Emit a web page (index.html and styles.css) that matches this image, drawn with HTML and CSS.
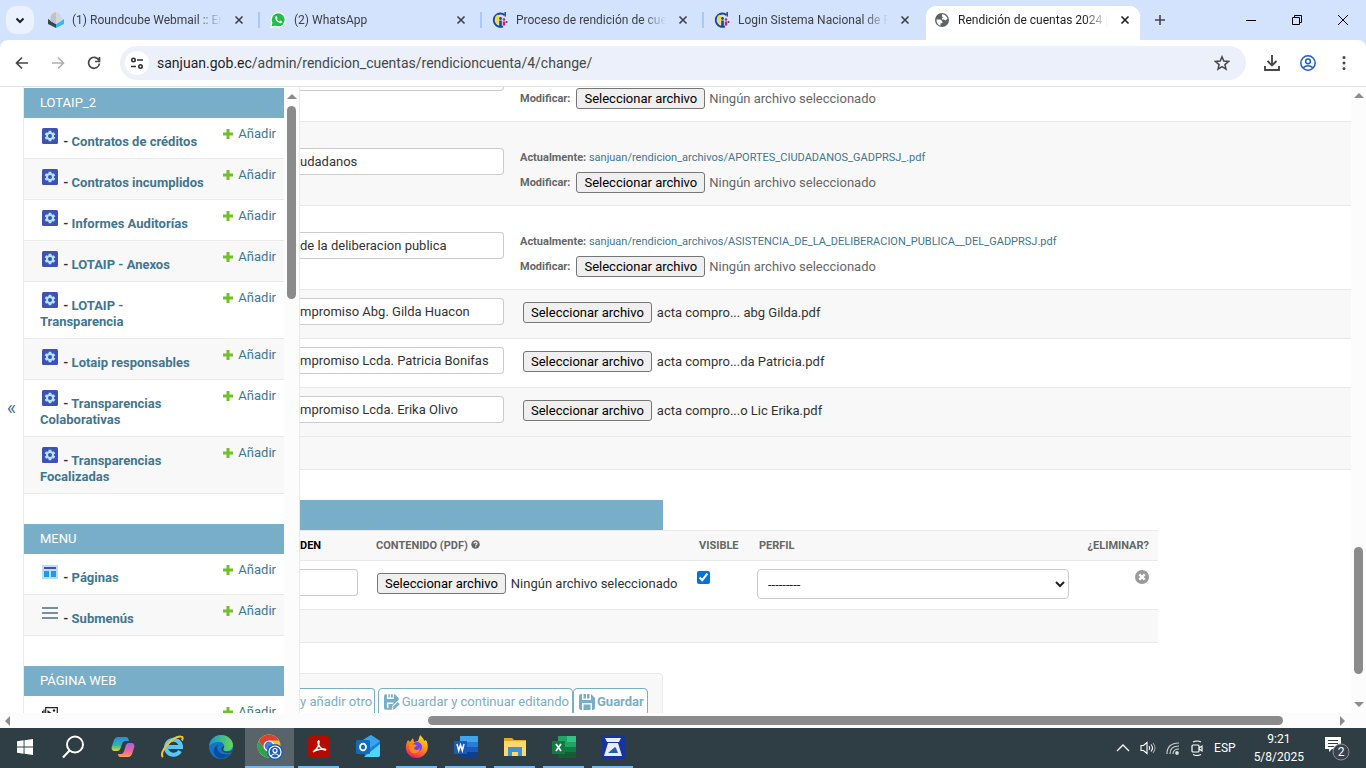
FILE: index.html
```html
<!DOCTYPE html>
<html lang="es">
<head>
    <meta charset="UTF-8">
    <meta name="viewport" content="width=device-width, initial-scale=1.0">
    <title>Rendición de cuentas 2024</title>
    <link rel="stylesheet" href="styles.css">
</head>
<body>
    <!-- Shared icons -->
    <svg class="sprites" aria-hidden="true">
        <symbol id="i-close" viewBox="0 0 10 10"><path d="M1.5 1.5l7 7M8.5 1.5l-7 7" stroke="currentColor" stroke-width="1.6" fill="none"/></symbol>
        <symbol id="i-gear" viewBox="0 0 16 16">
            <rect width="16" height="16" rx="1.5" fill="#3f51b5"/>
            <path d="M8 2.700v10.600M3.400 5.350l9.200 5.300M3.400 10.650l9.200-5.300" stroke="#b3e5fc" stroke-width="2.800"/>
            <circle cx="8" cy="8" r="4" fill="#b3e5fc"/>
            <circle cx="8" cy="8" r="2" fill="#3f51b5"/>
        </symbol>
        <symbol id="i-plus" viewBox="0 0 12 12"><path d="M6 1v10M1 6h10" stroke="#70bf2b" stroke-width="3"/></symbol>
        <symbol id="i-egob" viewBox="0 0 16 16">
            <path d="M12.500 3A6.600 6.600 0 1 0 11 14.300" fill="none" stroke="#164a94" stroke-width="2"/>
            <path d="M13.200 0v4.500" stroke="#164a94" stroke-width="1.500"/>
            <path d="M3.500 4.500c2-3 4-2 3.500 1l-.5 7c-3-1-4-5-3-8z" fill="#f1d94a"/>
            <circle cx="8.500" cy="6.500" r="1.400" fill="#164a94"/><path d="M7.200 8.500h2.600v6H7.200z" fill="#164a94"/>
            <circle cx="12" cy="7.500" r="1.300" fill="#d81e5b"/><path d="M10.800 9.500h2.400v4h-2.400z" fill="#d81e5b"/>
            <circle cx="14.500" cy="10" r="1" fill="#164a94"/>
        </symbol>
    </svg>

    <header class="browser">
        <div class="tabstrip">
            <button class="tab-search" aria-label="Buscar pestañas"><svg width="12" height="12" viewBox="0 0 12 12"><path d="M2.500 4.500L6 8l3.500-3.500" fill="none" stroke="#1f1f1f" stroke-width="2"/></svg></button>
            <div class="tab">
                <svg class="favicon" viewBox="0 0 16 16"><path d="M0 7l8 5v4L0 12z" fill="#37474f"/><path d="M16 7l-8 5v4l8-4z" fill="#36b8f5"/><path d="M8 0q5 1 5.500 6v3L8 12 2.500 9V6Q3 1 8 0z" fill="#d5d8da"/><path d="M8 0q-5 1-5.500 6v3L8 12z" fill="#bfc4c7"/></svg>
                <span class="tab-title">(1) Roundcube Webmail :: En</span>
                <button class="tab-close" aria-label="Cerrar"><svg><use href="#i-close"/></svg></button>
            </div>
            <div class="tab">
                <svg class="favicon" viewBox="0 0 16 16"><circle cx="8.200" cy="7.800" r="7.600" fill="#fff"/><path d="M0 16l1.500-5 3.500 4z" fill="#fff"/><circle cx="8.200" cy="7.800" r="6.500" fill="#1fc04a"/><path d="M1.500 14.500l1-4 3 3z" fill="#1fc04a"/><path d="M5.500 4.500l1.200-.3.900 2-.7.900c.6 1.100 1.400 1.800 2.500 2.300l.9-1 1.900 1-.2 1.200c-1 1-2.500.7-4.200-.5S4.500 6.300 5.500 4.500z" fill="#fff"/></svg>
                <span class="tab-title">(2) WhatsApp</span>
                <button class="tab-close" aria-label="Cerrar"><svg><use href="#i-close"/></svg></button>
            </div>
            <div class="tab">
                <svg class="favicon"><use href="#i-egob"/></svg>
                <span class="tab-title">Proceso de rendición de cue</span>
                <button class="tab-close" aria-label="Cerrar"><svg><use href="#i-close"/></svg></button>
            </div>
            <div class="tab last">
                <svg class="favicon"><use href="#i-egob"/></svg>
                <span class="tab-title">Login Sistema Nacional de R</span>
                <button class="tab-close" aria-label="Cerrar"><svg><use href="#i-close"/></svg></button>
            </div>
            <div class="tab active">
                <svg class="favicon" viewBox="0 0 16 16"><circle cx="8" cy="8" r="7" fill="#5f6368"/><path d="M2.500 7.500h4l1.800 1.800v2H6.500v2.500C4 13 2.300 10.500 2.500 7.500zM8 2.300c2.500 0 5 2 5.500 4.500l-2 1.700-1.500-1H8V5.700h1.500L8 4.500z" fill="#fff"/></svg>
                <span class="tab-title">Rendición de cuentas 2024 |</span>
                <button class="tab-close" aria-label="Cerrar"><svg><use href="#i-close"/></svg></button>
            </div>
            <button class="new-tab" aria-label="Nueva pestaña"><svg width="12" height="12" viewBox="0 0 12 12"><path d="M6 1v10M1 6h10" stroke="#444746" stroke-width="1.600"/></svg></button>
            <div class="window-controls">
                <button aria-label="Minimizar"><svg width="10" height="10" viewBox="0 0 10 10"><path d="M0 5.500h10" stroke="#000"/></svg></button>
                <button aria-label="Restaurar"><svg width="10" height="10" viewBox="0 0 10 10"><path d="M.5 2.500h7v7h-7zM2.500 2.500v-2h7v7h-2" fill="none" stroke="#000"/></svg></button>
                <button aria-label="Cerrar ventana"><svg width="10" height="10" viewBox="0 0 10 10"><path d="M0 0l10 10M10 0L0 10" stroke="#000"/></svg></button>
            </div>
        </div>
        <div class="toolbar">
            <button aria-label="Atrás"><svg width="16" height="16" viewBox="0 0 16 16"><path d="M14 8H3M8 2.500L2.500 8 8 13.500" fill="none" stroke="#474747" stroke-width="1.700"/></svg></button>
            <button aria-label="Adelante"><svg width="16" height="16" viewBox="0 0 16 16"><path d="M2 8h11M8 2.500L13.500 8 8 13.500" fill="none" stroke="#b0b0b0" stroke-width="1.700"/></svg></button>
            <button aria-label="Recargar"><svg width="16" height="16" viewBox="0 0 16 16"><path d="M12.800 5A5.500 5.500 0 1 0 13.500 8.500M13.500 2v4.500H9" fill="none" stroke="#474747" stroke-width="1.700"/></svg></button>
            <div class="omnibox">
                <span class="site-info"><svg width="14" height="14" viewBox="0 0 14 14"><g fill="none" stroke="#303030" stroke-width="1.600"><circle cx="3.500" cy="4" r="1.700"/><path d="M7 4h6M1 10.500h5"/><circle cx="10.500" cy="10.500" r="1.700"/></g></svg></span>
                <span class="url"><b>sanjuan.gob.ec</b>/admin/rendicion_cuentas/rendicioncuenta/4/change/</span>
                <button aria-label="Marcador"><svg width="16" height="16" viewBox="0 0 16 16"><path d="M8 1.800l1.800 4.300 4.700.4-3.600 3.100 1.100 4.500L8 11.700l-4 2.400 1.100-4.500L1.500 6.500l4.700-.4z" fill="none" stroke="#474747" stroke-width="1.500"/></svg></button>
            </div>
            <div class="toolbar-end">
                <button aria-label="Descargas"><svg width="16" height="16" viewBox="0 0 16 16"><path d="M8 0v10M3.500 6L8 10.500 12.500 6M1 11v4h14v-4" fill="none" stroke="#474747" stroke-width="1.900"/></svg></button>
                <button aria-label="Perfil"><svg width="16" height="16" viewBox="0 0 16 16"><g fill="none" stroke="#1a5fc8" stroke-width="1.500"><circle cx="8" cy="8" r="7.200"/><circle cx="8" cy="6.300" r="2.400"/><path d="M3.300 12.800c2.500-2.600 6.900-2.600 9.400 0"/></g></svg></button>
                <button aria-label="Menú"><svg width="16" height="16" viewBox="0 0 16 16" fill="#474747"><circle cx="8" cy="2.500" r="1.500"/><circle cx="8" cy="8" r="1.500"/><circle cx="8" cy="13.500" r="1.500"/></svg></button>
            </div>
        </div>
    </header>

    <div class="page">
        <button class="toggle-nav-sidebar" aria-label="Ocultar navegación">«</button>
        <nav class="nav-sidebar">
            <div class="nav-content">
                <table class="module">
                    <caption>LOTAIP_2</caption>
                    <tr><th><svg class="model-icon"><use href="#i-gear"/></svg> - <a href="#">Contratos de créditos</a></th><td><a href="#"><svg><use href="#i-plus"/></svg>Añadir</a></td></tr>
                    <tr><th><svg class="model-icon"><use href="#i-gear"/></svg> - <a href="#">Contratos incumplidos</a></th><td><a href="#"><svg><use href="#i-plus"/></svg>Añadir</a></td></tr>
                    <tr><th><svg class="model-icon"><use href="#i-gear"/></svg> - <a href="#">Informes Auditorías</a></th><td><a href="#"><svg><use href="#i-plus"/></svg>Añadir</a></td></tr>
                    <tr><th><svg class="model-icon"><use href="#i-gear"/></svg> - <a href="#">LOTAIP - Anexos</a></th><td><a href="#"><svg><use href="#i-plus"/></svg>Añadir</a></td></tr>
                    <tr><th><svg class="model-icon"><use href="#i-gear"/></svg> - <a href="#">LOTAIP - Transparencia</a></th><td><a href="#"><svg><use href="#i-plus"/></svg>Añadir</a></td></tr>
                    <tr><th><svg class="model-icon"><use href="#i-gear"/></svg> - <a href="#">Lotaip responsables</a></th><td><a href="#"><svg><use href="#i-plus"/></svg>Añadir</a></td></tr>
                    <tr><th><svg class="model-icon"><use href="#i-gear"/></svg> - <a href="#">Transparencias Colaborativas</a></th><td><a href="#"><svg><use href="#i-plus"/></svg>Añadir</a></td></tr>
                    <tr><th><svg class="model-icon"><use href="#i-gear"/></svg> - <a href="#">Transparencias Focalizadas</a></th><td><a href="#"><svg><use href="#i-plus"/></svg>Añadir</a></td></tr>
                </table>
                <table class="module">
                    <caption>MENU</caption>
                    <tr><th><svg class="model-icon" viewBox="0 0 16 16"><path d="M0 1h16v14H0z" fill="#bbdefb"/><path d="M2 3h12v2H2z" fill="#3f51b5"/><path d="M2 7h5v6H2zM9 7h5v6H9z" fill="#2196f3"/></svg> - <a href="#">Páginas</a></th><td><a href="#"><svg><use href="#i-plus"/></svg>Añadir</a></td></tr>
                    <tr><th><svg class="model-icon" viewBox="0 0 16 16"><path d="M0 3h16M0 8h16M0 13h16" stroke="#78909c" stroke-width="1.800"/></svg> - <a href="#">Submenús</a></th><td><a href="#"><svg><use href="#i-plus"/></svg>Añadir</a></td></tr>
                </table>
                <table class="module">
                    <caption>PÁGINA WEB</caption>
                    <tr><th><svg class="model-icon" viewBox="0 0 16 16"><path d="M3.700 1.700h11.600v9.600H3.700zM2 3.500v10h11M.5 5v10h11" fill="none" stroke="#222" stroke-width="1.200"/><path d="M5.500 4l4 3-4 3z" fill="#222"/><circle cx="12" cy="4.500" r="1.200" fill="#222"/></svg></th><td><a href="#"><svg><use href="#i-plus"/></svg>Añadir</a></td></tr>
                </table>
            </div>
            <div class="scrollbar nav-scroll"><i class="arrow up"></i><span class="thumb"></span></div>
        </nav>

        <main>
            <table class="inline files">
                <colgroup><col class="col-name"><col></colgroup>
                <tr class="saved">
                    <td><input type="text" aria-label="Nombre"></td>
                    <td><div class="change"><b>Modificar:</b><button type="button" class="pick">Seleccionar archivo</button><span>Ningún archivo seleccionado</span></div></td>
                </tr>
                <tr class="saved">
                    <td><input type="text" aria-label="Nombre" value="udadanos"></td>
                    <td>
                        <div class="current"><b>Actualmente:</b> <a href="#">sanjuan/rendicion_archivos/APORTES_CIUDADANOS_GADPRSJ_.pdf</a></div>
                        <div class="change"><b>Modificar:</b><button type="button" class="pick">Seleccionar archivo</button><span>Ningún archivo seleccionado</span></div>
                    </td>
                </tr>
                <tr class="saved">
                    <td><input type="text" aria-label="Nombre" value="de la deliberacion publica"></td>
                    <td>
                        <div class="current"><b>Actualmente:</b> <a href="#">sanjuan/rendicion_archivos/ASISTENCIA_DE_LA_DELIBERACION_PUBLICA__DEL_GADPRSJ.pdf</a></div>
                        <div class="change"><b>Modificar:</b><button type="button" class="pick">Seleccionar archivo</button><span>Ningún archivo seleccionado</span></div>
                    </td>
                </tr>
                <tr>
                    <td><input type="text" aria-label="Nombre" value="mpromiso Abg. Gilda Huacon"></td>
                    <td><div class="file"><button type="button" class="pick">Seleccionar archivo</button><span>acta compro... abg Gilda.pdf</span></div></td>
                </tr>
                <tr>
                    <td><input type="text" aria-label="Nombre" value="mpromiso Lcda. Patricia Bonifas"></td>
                    <td><div class="file"><button type="button" class="pick">Seleccionar archivo</button><span>acta compro...da Patricia.pdf</span></div></td>
                </tr>
                <tr>
                    <td><input type="text" aria-label="Nombre" value="mpromiso Lcda. Erika Olivo"></td>
                    <td><div class="file"><button type="button" class="pick">Seleccionar archivo</button><span>acta compro...o Lic Erika.pdf</span></div></td>
                </tr>
                <tr class="add-row"><td colspan="2"></td></tr>
            </table>

            <h2 class="inline-heading"></h2>
            <table class="inline contents">
                <colgroup><col class="col-order"><col class="col-pdf"><col class="col-visible"><col class="col-profile"><col class="col-delete"></colgroup>
                <thead>
                    <tr>
                        <th class="required">DEN</th>
                        <th>CONTENIDO (PDF) <svg class="help" viewBox="0 0 10 10"><circle cx="5" cy="5" r="4.700" fill="#666"/><path d="M3.300 4c0-2.200 3.500-2 3.400-.2C6.700 5 5.200 4.800 5.200 6M5.200 6.900v1.200" fill="none" stroke="#fff" stroke-width="1.300"/></svg></th>
                        <th>VISIBLE</th>
                        <th>PERFIL</th>
                        <th class="delete">¿ELIMINAR?</th>
                    </tr>
                </thead>
                <tbody>
                    <tr>
                        <td><input type="text" aria-label="Orden"></td>
                        <td><div class="file"><button type="button" class="pick">Seleccionar archivo</button><span>Ningún archivo seleccionado</span></div></td>
                        <td><input type="checkbox" aria-label="Visible" checked></td>
                        <td><select aria-label="Perfil"><option>---------</option></select></td>
                        <td class="delete"><button type="button" class="remove" aria-label="Eliminar"><svg width="14" height="14" viewBox="0 0 14 14"><circle cx="7" cy="7" r="7" fill="#999"/><path d="M4.300 4.300l5.400 5.400M9.700 4.300L4.300 9.700" stroke="#fff" stroke-width="2.400"/></svg></button></td>
                    </tr>
                    <tr class="add-row"><td colspan="5"></td></tr>
                </tbody>
            </table>

            <div class="submit-row">
                <button type="button" class="another">y añadir otro</button>
                <button type="button" class="continue"><svg viewBox="0 0 16 16"><path d="M0 2q0-2 2-2h1v5h7V0h1l4 4v2l-7 6v4H2q-2 0-2-2z" fill="#79aec8"/><path d="M4.500 0H6v3.500H4.500zM7 0h2v3.500H7z" fill="#79aec8"/><path d="M3 8.500h7l-2.500 3V14H3z" fill="#fff"/><path d="M4.500 10h4v4h-4z" fill="#79aec8"/><path d="M9 15.800l.5-3.300L14 8l2 2-4.500 4.700z" fill="#79aec8"/></svg>Guardar y continuar editando</button>
                <button type="button" class="default"><svg viewBox="0 0 16 16"><path d="M0 2q0-2 2-2h1v6h9V0l4 4v10q0 2-2 2h-1V9H3v7H2q-2 0-2-2z" fill="#79aec8"/><path d="M4.500 0H7v4.500H4.500zM8 0h2.500v4.500H8zM4.500 10.500h7V16h-7z" fill="#79aec8"/></svg>Guardar</button>
            </div>
        </main>
        <div class="scrollbar page-scroll"><i class="arrow up"></i><span class="thumb"></span><i class="arrow down"></i></div>
    </div>
    <div class="scrollbar-x"><i class="arrow left"></i><div class="track"><span class="thumb"></span></div><i class="arrow right"></i></div>

    <footer class="taskbar">
        <button aria-label="Inicio"><svg width="16" height="16" viewBox="0 0 16 16"><path d="M0 2.300L6.600 1.300v6.200H0zM7.500 1.200L16 0v7.500H7.500zM0 8.500h6.600v6.200L0 13.700zM7.500 8.500H16V16l-8.500-1.200z" fill="#fff"/></svg></button>
        <button aria-label="Buscar"><svg width="24" height="24" viewBox="0 0 24 24"><circle cx="13" cy="9.500" r="8" fill="none" stroke="#fff" stroke-width="2"/><path d="M7.500 15.500L1 22.500" stroke="#fff" stroke-width="2.200"/></svg></button>
        <button aria-label="Copilot"><svg width="24" height="24" viewBox="0 0 24 24"><defs><linearGradient id="cop1" x2="0" y2="1"><stop stop-color="#1f8fe8"/><stop offset=".6" stop-color="#33b6a0"/><stop offset="1" stop-color="#e7d32d"/></linearGradient><linearGradient id="cop2" x2="0" y2="1"><stop stop-color="#a45fe8"/><stop offset=".6" stop-color="#f0679a"/><stop offset="1" stop-color="#ffa04d"/></linearGradient></defs><path d="M7 2h8c2 0 2 1 3 4h-4c-2 0-3 2-4 6-1 3-2 4-4 4H4c-3 0-4-2-3-5l2-6c1-2 2-3 4-3z" fill="url(#cop1)"/><path d="M17 22H9c-1 0-2-1-2-3h3c2 0 3-2 4-6 1-4 2-5 4-5h2c3 0 4 2 3 5l-2 6c-1 2-2 3-4 3z" fill="url(#cop2)"/></svg></button>
        <button aria-label="Internet Explorer"><svg width="24" height="24" viewBox="0 0 24 24"><path d="M20 16a7.500 7.500 0 1 1 1-4H8" fill="none" stroke="#57c7f5" stroke-width="4"/><path d="M3 22C-2 18 12 1 21 1.500c2 0 2 2 1 4" fill="none" stroke="#f5c431" stroke-width="2"/></svg></button>
        <button aria-label="Edge"><svg width="24" height="24" viewBox="0 0 24 24"><defs><linearGradient id="edge"><stop stop-color="#1696d8"/><stop offset="1" stop-color="#63d94f"/></linearGradient></defs><circle cx="12" cy="12" r="12" fill="#1273c9"/><path d="M0 11C1 4 6 0 12 0c7 0 12 5 12 10 0 4-3 6-6 6-4 0-4-1-3-3 1-4-2-6-5-6-5 0-8 2-10 4z" fill="url(#edge)"/><path d="M9 10c-3 5 2 11 12 9-5 6-14 6-16-1-1-4 1-7 4-8z" fill="#0c4d99"/><path d="M14.500 13c-2 3 3 5 8 3l1 1c-5 2-11 0-11-3 0-1 1-2 2-3 1 0 1 1 0 2z" fill="#2f3d44"/></svg></button>
        <button class="current-app" aria-label="Chrome"><svg width="26" height="26" viewBox="0 0 26 26"><circle cx="12" cy="12" r="11.500" fill="#f9c22c"/><path d="M2 6.500A11.500 11.500 0 0 1 22 6.500H12L7 15z" fill="#dd4033"/><path d="M2 6.500a11.500 11.500 0 0 0 10 17l5-8.500H7z" fill="#2fa251"/><circle cx="12" cy="12" r="5.500" fill="#fff"/><circle cx="12" cy="12" r="4.400" fill="#3c7de6"/><circle cx="18" cy="18" r="8" fill="#1b5bc0"/><g fill="none" stroke="#fff" stroke-width="1.200"><circle cx="18" cy="18" r="6"/><circle cx="18" cy="16.500" r="2"/><path d="M14 22c2-3 6-3 8 0"/></g></svg></button>
        <button class="open" aria-label="Acrobat"><svg width="22" height="22" viewBox="0 0 22 22"><rect width="22" height="22" rx="4" fill="#b30b00"/><path d="M5 16c3-2 6-6 6-10 0-2-1-1-1 0 0 4 4 8 7 8 1 0 1-1-1-1-4 0-8 1-11 3z" fill="none" stroke="#fff" stroke-width="1.500"/></svg></button>
        <button aria-label="Outlook"><svg width="24" height="24" viewBox="0 0 24 24"><path d="M7 5l8-5 9 6v14q0 2-2 2H9z" fill="#1683d8"/><path d="M7 5l8-5 9 6-11 8z" fill="#38a4eb"/><path d="M24 9v11q0 2-2 2H8z" fill="#4fd4fa"/><rect y="5" width="14" height="14" rx="1.500" fill="#0f6cbd"/><ellipse cx="7" cy="12" rx="3" ry="3.400" fill="none" stroke="#fff" stroke-width="1.800"/></svg></button>
        <button class="open" aria-label="Firefox"><svg width="24" height="24" viewBox="0 0 24 24"><defs><linearGradient id="fox" x1=".8" y1="0" x2=".3" y2="1"><stop stop-color="#ffe226"/><stop offset=".5" stop-color="#ff8a16"/><stop offset="1" stop-color="#f5156c"/></linearGradient></defs><path d="M3 5l2 2 3-4 1 4 4-1 2-6c3 3 4 4 4 6l2-1c3 5 2 11-1 14-4 5-12 5-16 1C0 16 0 10 3 5z" fill="url(#fox)"/><circle cx="12" cy="12" r="5" fill="#7542e5"/><path d="M4 10c3-2 5 0 8 0-1 2-3 2-3 4 2 2 5 1 6-1 0 5-6 7-9 4-2-2-2-5-2-7z" fill="#ff8a16"/></svg></button>
        <button class="open" aria-label="Word"><svg width="24" height="22" viewBox="0 0 24 22"><path d="M6 0h18v6H6z" fill="#41a5ee"/><path d="M6 6h18v5H6z" fill="#2b7cd3"/><path d="M6 11h18v5H6z" fill="#185abd"/><path d="M6 16h18v6H6z" fill="#103f91"/><path d="M0 5h13v13H0z" fill="#185abd"/><path d="M3 8l1.700 6.500L6.500 9l1.800 5.500L10 8" fill="none" stroke="#fff" stroke-width="1.500"/></svg></button>
        <button class="open" aria-label="Explorador"><svg width="24" height="22" viewBox="0 0 24 22"><path d="M1 2h8l2 2h12v16H1z" fill="#e8a91e"/><path d="M1 5h22v15H1z" fill="#ffd970"/><path d="M5 11h14v9h-4v-4H9v4H5z" fill="#3b95d5"/></svg></button>
        <button class="open" aria-label="Excel"><svg width="24" height="22" viewBox="0 0 24 22"><path d="M6 0h9v22H6z" fill="#21a366"/><path d="M15 0h9v6h-9z" fill="#33c481"/><path d="M15 6h9v5h-9z" fill="#21a366"/><path d="M6 11h18v11H6z" fill="#107c41"/><path d="M6 16h18v6H6z" fill="#185c37"/><path d="M0 5h13v13H0z" fill="#107c41"/><path d="M4 8l5 7M9 8l-5 7" stroke="#fff" stroke-width="1.700"/></svg></button>
        <button class="open" aria-label="Escáner"><svg width="24" height="24" viewBox="0 0 24 24"><rect width="24" height="24" rx="3" fill="#17339c"/><path d="M4 3h16l-2 4H6zM7 8h10l4 13H3z" fill="#e8edf5"/><path d="M7 18l7-6 1 1 2 5z" fill="#1d5cae"/></svg></button>
        <div class="tray">
            <svg width="14" height="14" viewBox="0 0 14 14"><path d="M1 10l6-6 6 6" fill="none" stroke="#fff" stroke-width="1.300"/></svg>
            <svg width="16" height="16" viewBox="0 0 16 16" fill="none" stroke="#fff" stroke-width="1.100"><path d="M1 5.500h2.500L7 2.500v11L3.500 10.500H1zM9 6q1.500 2 0 4M11 4.500q3 3.500 0 7"/><path d="M13 3q4 5 0 10" stroke="#9aa3a8"/></svg>
            <svg width="14" height="14" viewBox="0 0 14 14" fill="none" stroke="#c9ced1" stroke-width="1.200"><path d="M1 13Q1 2 13 2M4 13Q4 5 13 5M7 13Q7 8 13 8"/><circle cx="11" cy="12" r="1.300" fill="#fff"/></svg>
            <svg width="14" height="16" viewBox="0 0 14 16" fill="none" stroke="#fff" stroke-width="1.200"><rect x="2" y="5" width="7" height="7" rx="1"/><path d="M9 8l3-2v5l-3-2M3 2q4-2 8 0M3 14.500q4 2 8 0"/></svg>
            <span>ESP</span>
            <time>9:21<br>5/8/2025</time>
            <svg class="notify" width="26" height="26" viewBox="0 0 26 26"><path d="M1 2h16v12H8l-3 3v-3H1z" fill="#fff"/><path d="M4 5.500h10M4 8.500h10M4 11.500h6" stroke="#2f3d44"/><circle cx="17" cy="17" r="8" fill="#3a4349" stroke="#8b9194"/><text x="17" y="21" text-anchor="middle" fill="#fff">2</text></svg>
        </div>
    </footer>
</body>
</html>
```
FILE: styles.css
```css
* {
    box-sizing: border-box;
}

body {
    display: flex;
    flex-direction: column;
    height: 100vh;
    margin: 0;
    overflow: hidden;
    background: #fff;
    color: #333;
    font-family: Roboto, "Liberation Sans", sans-serif;
    font-size: 13px;
    line-height: 16px;
}

button {
    padding: 0;
    border: 0;
    background: none;
    font: inherit;
    color: inherit;
}

a {
    color: #417690;
    text-decoration: none;
}

.sprites {
    position: absolute;
    width: 0;
    height: 0;
}

/* Browser window */
.browser {
    flex: none;
    background: #d3e2fd;
    border-bottom: 1px solid #dfe1e5;
}

.tabstrip {
    display: flex;
    align-items: center;
    height: 40px;
    padding-left: 6px;
}

.tab-search {
    width: 28px;
    height: 28px;
    margin-right: 4px;
    border-radius: 10px;
    background: #ebf1fe;
}

.tab-search svg {
    display: block;
    margin: auto;
}

.tab {
    display: flex;
    align-items: center;
    flex: 0 1 222px;
    min-width: 0;
    height: 16px;
    padding: 0 14px 0 10px;
    border-right: 2px solid #a8c7fa;
    font-size: 12px;
    color: #3c4043;
}

.tab.last {
    border-color: transparent;
}

.tab.active {
    flex-basis: 214px;
    height: 34px;
    align-self: flex-end;
    padding: 0 10px 6px 8px;
    border: 0;
    border-radius: 10px 10px 0 0;
    background: #fff;
    color: #1f1f1f;
}

.favicon {
    flex: none;
    width: 16px;
    height: 16px;
    margin-right: 8px;
}

.tab-title {
    flex: 1;
    min-width: 0;
    overflow: hidden;
    white-space: nowrap;
    mask-image: linear-gradient(to right, #000 calc(100% - 24px), transparent);
}

.tab-close {
    flex: none;
    width: 10px;
    height: 10px;
    margin-left: 12px;
}

.tab-close svg {
    display: block;
    width: 10px;
    height: 10px;
}

.new-tab {
    width: 40px;
    height: 28px;
}

.new-tab svg,
.window-controls svg {
    display: block;
    margin: auto;
}

.window-controls {
    display: flex;
    margin-left: auto;
}

.window-controls button {
    width: 46px;
    height: 40px;
}

.toolbar {
    display: flex;
    align-items: center;
    height: 46px;
    padding: 0 4px;
    border-radius: 8px 8px 0 0;
    background: #fff;
}

.toolbar button {
    width: 36px;
    height: 34px;
}

.toolbar svg {
    display: block;
    margin: auto;
}

.omnibox {
    display: flex;
    align-items: center;
    flex: 1;
    height: 34px;
    margin: 0 8px;
    padding: 0 6px 0 5px;
    border-radius: 17px;
    background: #ebf0fa;
}

.site-info {
    display: flex;
    width: 24px;
    height: 24px;
    margin-right: 8px;
    border-radius: 12px;
    background: #fff;
}

.url {
    flex: 1;
    font-size: 14px;
    color: #474747;
}

.url b {
    font-weight: 400;
    color: #1f1f1f;
}

.toolbar-end {
    display: flex;
}

/* Scrollbars */
.arrow {
    flex: none;
    width: 0;
    height: 0;
    border: 5px solid transparent;
}

.up {
    border-top: 0;
    border-bottom-color: #8b8b8b;
}

.down {
    border-bottom: 0;
    border-top-color: #8b8b8b;
}

.left {
    border-left: 0;
    border-right-color: #8b8b8b;
}

.right {
    border-right: 0;
    border-left-color: #8b8b8b;
}

.thumb {
    border-radius: 5px;
    background: #8b8b8b;
}

.scrollbar {
    display: flex;
    flex-direction: column;
    align-items: center;
    flex: none;
    width: 15px;
    padding: 6px 0;
    background: #fcfcfc;
}

.scrollbar .thumb {
    width: 9px;
}

.nav-scroll .thumb {
    height: 193px;
    margin-top: 7px;
}

.page-scroll .thumb {
    height: 127px;
    margin-top: auto;
    margin-bottom: 28px;
}

.scrollbar-x {
    display: flex;
    align-items: center;
    flex: none;
    height: 15px;
    padding: 0 21px 0 5px;
    background: #fcfcfc;
}

.scrollbar-x .track {
    display: flex;
    flex: 1;
    padding: 0 57px 0 418px;
}

.scrollbar-x .thumb {
    flex: 1;
    height: 9px;
}

/* Navigation */
.page {
    display: flex;
    flex: 1;
    min-height: 0;
}

.toggle-nav-sidebar {
    flex: none;
    width: 24px;
    padding-top: 16px;
    border-right: 1px solid #eaeaea;
    font-size: 20px;
    color: #417690;
}

.nav-sidebar {
    display: flex;
    flex: none;
    width: 276px;
    padding-top: 1px;
    border-right: 1px solid #eaeaea;
    overflow: hidden;
}

.nav-content {
    flex: 1;
}

.module {
    width: 100%;
    margin-bottom: 30px;
    border-spacing: 0;
}

.module caption {
    height: 30px;
    padding: 7px 16px;
    background: #79aec8;
    color: #fff;
    font-size: 13px;
    text-align: left;
}

.module th,
.module td {
    padding: 8px;
    border-bottom: 1px solid #eaeaea;
    vertical-align: top;
    text-align: right;
}

.module th {
    width: 182px;
    padding: 8px 0 8px 16px;
    text-align: left;
}

.module tr:nth-child(even),
.inline tr:nth-child(even) {
    background: #f8f8f8;
}

.module td svg {
    width: 12px;
    height: 12px;
    margin-right: 4px;
    vertical-align: -2px;
}

.model-icon {
    width: 16px;
    height: 16px;
    margin: 2px 2px 0;
    vertical-align: 2px;
}

/* Change form */
main {
    flex: 1;
    min-width: 0;
    overflow: hidden;
}

.inline {
    border-spacing: 0;
    table-layout: fixed;
}

.inline td {
    height: 49px;
    padding: 8px 8px 0;
    border-bottom: 1px solid #e8e8e8;
    vertical-align: top;
}

.inline td:first-child {
    padding-left: 0;
}

.inline .saved td {
    height: 84px;
    padding: 26px 8px 12px;
}

.inline .saved td:first-child {
    padding-left: 0;
}

.inline .saved td:last-child {
    vertical-align: bottom;
}

.inline .add-row td {
    height: 33px;
    padding: 0;
    background: #f8f8f8;
}

/* the list is scrolled a little into its first row */
.files {
    width: 100%;
    margin-top: -49px;
}

.col-name {
    width: 212px;
}

.inline input[type=text] {
    display: block;
    width: 100%;
    height: 27px;
    padding: 0;
    border: 1px solid #ccc;
    border-left: 0;
    border-radius: 0 4px 4px 0;
    background: #fff;
    color: #333;
    font: inherit;
}

.current {
    height: 18px;
    margin-bottom: 6px;
    line-height: 20px;
    font-size: 11px;
    color: #666;
}

.change,
.file {
    display: flex;
    align-items: center;
    gap: 4px;
    white-space: nowrap;
}

.change {
    color: #666;
}

.change b {
    margin-right: 2px;
    font-size: 11px;
}

.file {
    gap: 5px;
    padding: 4px 0 0 1px;
}

.files .file {
    padding-left: 3px;
}

.pick {
    height: 21px;
    padding: 0 7px;
    border: 1px solid #767676;
    border-radius: 3px;
    background: #efefef;
    color: #000;
}

.inline-heading {
    width: 363px;
    height: 30px;
    margin: 30px 0 0;
    background: #79aec8;
}

.contents {
    width: 858px;
}

.col-order {
    width: 68px;
}

.col-pdf {
    width: 321px;
}

.col-visible {
    width: 60px;
}

.col-profile {
    width: 328px;
}

.contents td:first-child {
    padding-right: 10px;
}

.contents th {
    height: 31px;
    padding: 0 8px;
    border: solid #e8e8e8;
    border-width: 1px 0;
    background: #f8f8f8;
    color: #666;
    font-size: 11px;
    text-align: left;
    white-space: nowrap;
}

.contents th.required {
    padding: 0;
    color: #000;
}

.contents th:nth-child(3),
.contents th:nth-child(4) {
    padding-left: 10px;
}

.contents .delete {
    padding-right: 9px;
    padding-left: 0;
    text-align: right;
}

.help {
    width: 9px;
    height: 9px;
}

.contents input[type=checkbox] {
    display: block;
    width: 13px;
    height: 13px;
    margin: 2px 0 0;
    accent-color: #0075d7;
}

.contents select {
    display: block;
    width: 312px;
    height: 30px;
    padding: 0 6px;
    border: 1px solid #ccc;
    border-radius: 4px;
    background: #fff;
    color: #222;
    font: inherit;
}

.remove svg {
    display: block;
    margin-top: 1px;
}

.submit-row {
    display: flex;
    width: 363px;
    margin-top: 30px;
    padding: 14px 14px 14px 0;
    border: 1px solid #eaeaea;
    border-left: 0;
    border-radius: 0 4px 4px 0;
    background: #f8f8f8;
}

.submit-row button {
    display: flex;
    align-items: center;
    height: 28px;
    padding: 0 3px 0 5px;
    border: 1px solid #79aec8;
    border-radius: 4px;
    background: #fff;
    color: #79aec8;
    white-space: nowrap;
}

.submit-row svg {
    width: 16px;
    height: 16px;
    margin-right: 2px;
}

.submit-row .another {
    width: 75px;
    margin-right: 3px;
    padding-left: 0;
    border-left: 0;
    border-radius: 0 4px 4px 0;
}

.submit-row .continue {
    width: 195px;
}

.submit-row .default {
    width: 75px;
    font-weight: 700;
}

/* Desktop bar */
.taskbar {
    display: flex;
    flex: none;
    height: 40px;
    background: #2f3d44;
    color: #fff;
    font-size: 12px;
}

.taskbar button {
    display: flex;
    align-items: center;
    justify-content: center;
    width: 49px;
    border-bottom: 2px solid transparent;
}

.taskbar .current-app {
    border-color: #76b9ed;
    background: #58646a;
}

.taskbar .open {
    width: 41px;
    margin: 0 4px;
    border-color: #76b9ed;
}

.tray {
    display: flex;
    align-items: center;
    gap: 10px;
    margin-left: auto;
    padding-right: 16px;
}

.tray time {
    margin: 0 10px 0 8px;
    line-height: 18px;
    text-align: center;
}

.notify {
    font-size: 12px;
}
```
